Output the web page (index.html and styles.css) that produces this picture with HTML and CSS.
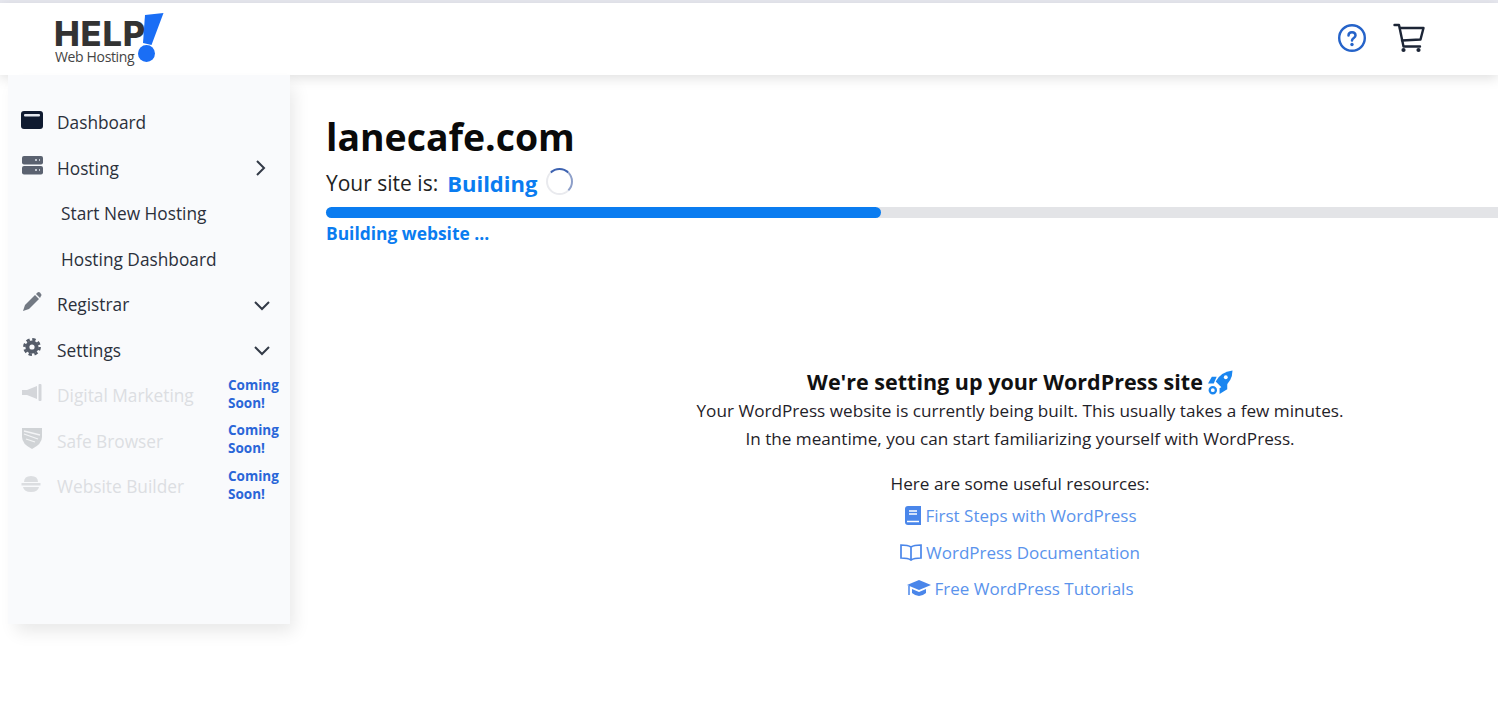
FILE: index.html
```html
<!DOCTYPE html>
<html lang="en">
<head>
    <meta charset="UTF-8">
    <meta name="viewport" content="width=device-width, initial-scale=1.0">
    <title>lanecafe.com | Help! Web Hosting</title>
    <link rel="stylesheet" href="styles.css">
</head>
<body>
    <div class="topline"></div>
    <header class="header">
        <div class="logo">
            <div class="logo-text">
                <b>HELP</b>
                <span>Web Hosting</span>
            </div>
            <svg class="logo-mark" width="28" height="52" viewBox="0 0 28 52">
                <path d="M9 3 L27.500 1 L15.500 33 L7 31 Z" fill="#1a6ef5"/>
                <circle cx="10.500" cy="41.500" r="8.500" fill="#1a6ef5"/>
            </svg>
        </div>
        <div class="header-icons">
            <svg width="30" height="30" viewBox="0 0 30 30" fill="none" stroke="#2563c9">
                <circle cx="15" cy="15" r="12.800" stroke-width="2.400"/>
                <path d="M11.500 12.500 C11.500 8 18.500 8 18.500 12.500 C18.500 15 15 15 15 17.500" stroke-width="2.500" stroke-linecap="round"/>
                <circle cx="15" cy="21.500" r="1.700" fill="#2563c9" stroke="none"/>
            </svg>
            <svg width="32" height="30" viewBox="0 0 32 30" fill="none" stroke="#1c2536" stroke-width="2.400" stroke-linejoin="round" stroke-linecap="round">
                <path d="M1.500 2 H6 L10.500 23.500 H27"/>
                <path d="M7 5 H30.500 L27.500 16.500 L9 17.500"/>
                <circle cx="10.500" cy="27" r="2.100" fill="#1c2536" stroke="none"/>
                <circle cx="25.500" cy="27" r="2.100" fill="#1c2536" stroke="none"/>
            </svg>
        </div>
    </header>

    <div class="page">
        <nav class="sidebar">
            <a class="item">
                <svg class="ico" width="24" height="20" viewBox="0 0 24 20"><rect x="1" y="1" width="22" height="18" rx="3" fill="#0f1a30"/><rect x="4" y="4" width="16" height="2.500" rx="1" fill="#e4e7ee"/></svg>
                <span class="label">Dashboard</span>
            </a>
            <a class="item">
                <svg class="ico" width="24" height="20" viewBox="0 0 24 20" fill="#5b6270"><rect x="2" y="1" width="21" height="8.500" rx="2"/><rect x="2" y="11" width="21" height="8.500" rx="2"/><path d="M15 5h2M19 5h1M15 15h2M19 15h1" stroke="#e4e7ee" stroke-width="1.500"/></svg>
                <span class="label">Hosting</span>
                <svg class="chev" width="18" height="18" viewBox="0 0 18 18"><path d="M6 2 L13 9 L6 16"/></svg>
            </a>
            <a class="item sub">Start New Hosting</a>
            <a class="item sub">Hosting Dashboard</a>
            <a class="item">
                <svg class="ico" width="24" height="20" viewBox="0 0 24 20" fill="#737983"><path d="M5 13 L15 3 L19 7 L9 17 L3 19 Z"/><path d="M16 2 L17.500 .500 Q18.500 -.500 20 .500 L21 2 Q22 3 21 4 L20 6 Z"/></svg>
                <span class="label">Registrar</span>
                <svg class="chev chev-down" width="18" height="18" viewBox="0 0 18 18"><path d="M2 6 L9 13 L16 6"/></svg>
            </a>
            <a class="item">
                <svg class="ico" width="24" height="20" viewBox="0 0 24 20"><circle cx="12" cy="10" r="4.600" fill="none" stroke="#555c69" stroke-width="4"/><circle cx="12" cy="10" r="7.600" fill="none" stroke="#555c69" stroke-width="2.600" stroke-dasharray="3.400 2.570"/></svg>
                <span class="label">Settings</span>
                <svg class="chev chev-down" width="18" height="18" viewBox="0 0 18 18"><path d="M2 6 L9 13 L16 6"/></svg>
            </a>
            <a class="item soon">
                <svg class="ico" width="24" height="20" viewBox="0 0 24 20" fill="#d4d6da"><path d="M2 7 H7 L17 3 V16 L7 12 H2 Z"/><rect x="18.500" y="1" width="3" height="17" rx="1"/></svg>
                <span class="label">Digital Marketing</span>
                <b class="coming">Coming Soon!</b>
            </a>
            <a class="item soon">
                <svg class="ico" width="24" height="22" viewBox="0 0 24 22" fill="#d0d3d6"><path d="M2 1 H22 V10 Q22 17 12 22 Q2 17 2 10 Z"/><path d="M4 4 L20 8 M4 7 L18 12 M6 12 L15 15" stroke="#f3f4f6" stroke-width="1.300"/></svg>
                <span class="label">Safe Browser</span>
                <b class="coming">Coming Soon!</b>
            </a>
            <a class="item soon">
                <svg class="ico" width="24" height="20" viewBox="0 0 24 20" fill="#dcdee1"><path d="M4 8 Q4 2 11 2 Q18 2 18 8 Z"/><rect x="1.500" y="9" width="19" height="2.500"/><path d="M3 13 H19 Q18 18 11 18 Q4 18 3 13 Z"/></svg>
                <span class="label">Website Builder</span>
                <b class="coming">Coming Soon!</b>
            </a>
        </nav>

        <main class="main">
            <h1 class="site">lanecafe.com</h1>
            <div class="status">
                <span>Your site is:</span>
                <b class="status-value">Building</b>
                <div class="spinner"></div>
            </div>
            <div class="progress"><div class="progress-bar" style="width:555px"></div></div>
            <div class="progress-text">Building website ...</div>

            <section class="setup">
                <h2>We're setting up your WordPress site
                    <svg width="25" height="25" viewBox="0 0 26 26" fill="#1a86f0"><path d="M8 12 Q13 2 25.500 .500 Q25.500 12 15 19 Z"/><path d="M9 7 H4 L0 14 H6 Z"/><path d="M20 14 V20 L12 25 V19 Z"/><circle cx="5" cy="21" r="3.200" fill="none" stroke="#1a86f0" stroke-width="2.400"/><circle cx="18.500" cy="7.500" r="2" fill="#fff"/></svg>
                </h2>
                <p>Your WordPress website is currently being built. This usually takes a few minutes.</p>
                <p>In the meantime, you can start familiarizing yourself with WordPress.</p>
                <p class="useful">Here are some useful resources:</p>
                <a class="res">
                    <svg width="18" height="19" viewBox="0 0 18 19" fill="#4a86ea"><path d="M4 0 H17 V19 H4 Q1 19 1 16 V3 Q1 0 4 0 Z"/><path d="M5 5 H13 M5 8 H13" stroke="#fff" stroke-width="1.300"/><path d="M3 15.500 H15" stroke="#fff" stroke-width="1.500"/></svg>
                    First Steps with WordPress
                </a>
                <a class="res">
                    <svg width="22" height="17" viewBox="0 0 22 17" fill="none" stroke="#4a86ea" stroke-width="1.700"><path d="M11 3 Q8 1 1 1 V14 Q8 14 11 16 Q14 14 21 14 V1 Q14 1 11 3 Z M11 3 V16"/></svg>
                    WordPress Documentation
                </a>
                <a class="res">
                    <svg width="24" height="18" viewBox="0 0 24 18" fill="#4a86ea"><path d="M12 0 L24 5 L12 10 L0 5 Z"/><path d="M5 9 L12 12 L19 9 V13 Q12 19 5 13 Z"/><path d="M2 6 V15" stroke="#4a86ea" stroke-width="1.500"/></svg>
                    Free WordPress Tutorials
                </a>
            </section>
        </main>
    </div>
</body>
</html>
```

FILE: styles.css
```css
*{margin:0;padding:0;box-sizing:border-box;font-family:"Open Sans","Noto Sans",Arial,sans-serif;}

body{background:#fff;color:#1c1f26;width:1498px;height:728px;overflow:hidden;}

.topline{height:3px;background:#e8e9f0;}

.header{
    height:72px;
    background:#fff;
    display:flex;
    justify-content:space-between;
    align-items:center;
    padding:0 73px 0 54px;
    box-shadow:0 3px 12px rgba(0,0,0,.13);
    position:relative;
    z-index:1;
}

.logo{display:flex;align-items:flex-start;height:52px;}
.logo-text{display:flex;flex-direction:column;margin-top:7px;width:82px;}
.logo-text b{font-family:Inter,Arial,sans-serif;font-size:34.500px;line-height:28px;font-weight:800;color:#333;letter-spacing:.8px;}
.logo-text span{font-size:14px;line-height:14px;color:#444;letter-spacing:-.35px;margin-left:1px;margin-top:2px;white-space:nowrap;}
.logo-mark{margin-left:0;margin-top:-1px;}

.header-icons{display:flex;align-items:center;gap:26px;margin-top:-2px;}

.page{display:flex;align-items:flex-start;}

.sidebar{
    width:282px;
    height:549px;
    margin-left:8px;
    flex-shrink:0;
    background:#f9fafc;
    padding:25px 12px 0 12px;
    box-shadow:6px 10px 16px -2px rgba(0,0,0,.09);
    position:relative;
    z-index:2;
}

.item{height:45.500px;display:flex;align-items:center;font-size:17.300px;color:#2b303b;}
.item .ico{width:24px;flex-shrink:0;margin-top:-6px;}
.label{margin-left:13px;flex:1;}
.sub{padding-left:41px;}
.chev{fill:none;stroke:#333a47;stroke-width:2;margin-right:9px;}
.chev-down{margin-right:7px;}
.soon .label{color:#dcdee2;}
.coming{width:54px;font-size:13.500px;line-height:18px;color:#2a66d8;font-weight:700;margin-right:-4px;margin-top:-4px;}

.main{width:1388px;margin-left:36px;flex-shrink:0;padding-top:38px;}

.site{font-size:37.400px;line-height:48px;font-weight:700;color:#0a0a0a;}

.status{display:flex;align-items:center;font-size:21px;line-height:32px;margin-top:6px;gap:9px;color:#222;}
.status-value{color:#0a7cf0;font-size:22px;}
.spinner{
    width:27px;
    height:27px;
    border-radius:50%;
    border:2px solid #e9eaee;
    border-top-color:#3d62b0;
    border-right-color:#8d9fc9;
    margin-top:-4px;
}

.progress{height:11px;border-radius:6px;background:#e3e4e7;margin-top:8px;}
.progress-bar{height:11px;border-radius:6px;background:#0a7cf0;}
.progress-text{font-size:17.400px;line-height:24px;font-weight:700;color:#0a7cf0;margin-top:3px;}

.setup{text-align:center;margin-top:122px;}
.setup h2{font-size:21.500px;line-height:30px;font-weight:700;color:#111;display:flex;justify-content:center;align-items:center;gap:5px;}
.setup p{font-size:17.150px;line-height:27.500px;color:#1f2229;}
.setup .useful{margin-top:18px;}

.res{display:flex;justify-content:center;align-items:center;gap:4px;height:36.500px;font-size:17px;color:#5a93ec;}
.res svg{flex-shrink:0;}
```
